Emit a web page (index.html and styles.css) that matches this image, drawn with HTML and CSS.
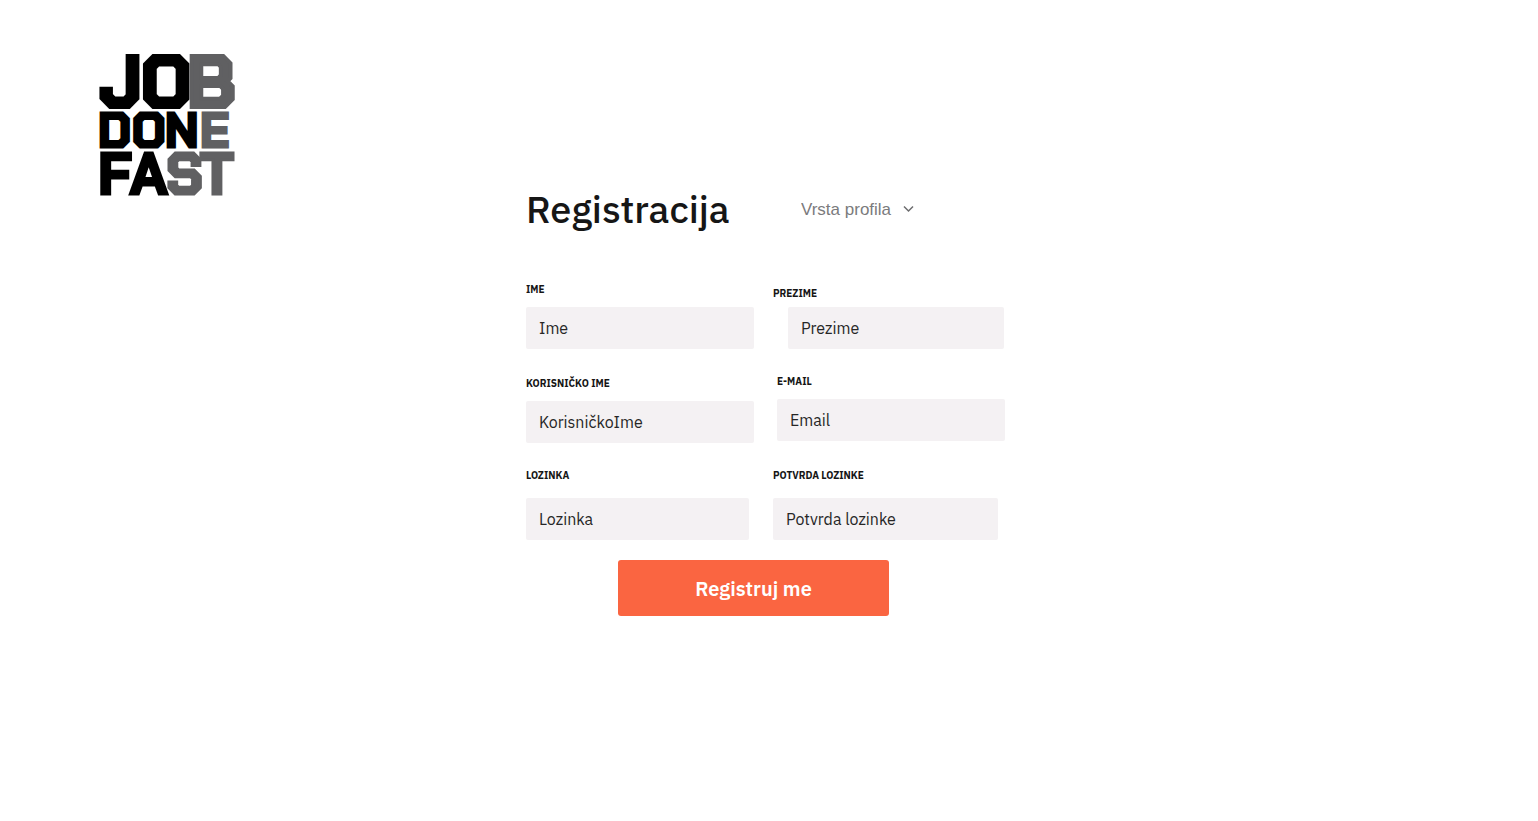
FILE: index.html
```html
<!DOCTYPE html>
<html lang="hr">
<head>
<meta charset="utf-8">
<meta name="viewport" content="width=device-width, initial-scale=1">
<title>Registracija</title>
<link rel="stylesheet" href="styles.css">
</head>
<body>
<div class="page">
  <header class="brand">
    <svg class="logo" viewBox="0 0 137 146" role="img" aria-label="Job Done Fast">
      <g class="logo-text">
        <text class="logo-job" x="1 42 88" y="56">JO<tspan class="logo-gray">B</tspan></text>
        <text class="logo-done" x="-1 33 66 101" y="96">DON<tspan class="logo-gray">E</tspan></text>
        <text class="logo-fast" x="-1 31 67 101" y="143">FA<tspan class="logo-gray">ST</tspan></text>
      </g>
    </svg>
  </header>
  <main class="register">
    <form class="form">
      <div class="heading">
        <h1 class="title">Registracija</h1>
        <div class="profile">
          <select class="profile-select" aria-label="Vrsta profila">
            <option>Vrsta profila</option>
          </select>
          <svg class="chevron" viewBox="0 0 12 8" aria-hidden="true"><path d="M1 1.500 5.500 6 10 1.500"/></svg>
        </div>
      </div>
      <div class="row">
        <div class="field">
          <label class="label" for="ime">IME</label>
          <input class="input" id="ime" type="text" placeholder="Ime">
        </div>
        <div class="field field-surname">
          <label class="label" for="prezime">PREZIME</label>
          <input class="input" id="prezime" type="text" placeholder="Prezime">
        </div>
      </div>
      <div class="row">
        <div class="field field-username">
          <label class="label" for="korisnicko">KORISNIČKO IME</label>
          <input class="input" id="korisnicko" type="text" placeholder="KorisničkoIme">
        </div>
        <div class="field field-email">
          <label class="label" for="email">E-MAIL</label>
          <input class="input" id="email" type="email" placeholder="Email">
        </div>
      </div>
      <div class="row">
        <div class="field field-password">
          <label class="label" for="lozinka">LOZINKA</label>
          <input class="input" id="lozinka" type="password" placeholder="Lozinka">
        </div>
        <div class="field field-confirm">
          <label class="label" for="potvrda">POTVRDA LOZINKE</label>
          <input class="input" id="potvrda" type="password" placeholder="Potvrda lozinke">
        </div>
      </div>
      <button class="submit" type="submit">Registruj me</button>
    </form>
  </main>
</div>
</body>
</html>
```
FILE: styles.css
```css
* { box-sizing: border-box; }

body {
  margin: 0;
  background: #fff;
  color: #161616;
  font-family: "IBM Plex Sans", "Noto Sans", sans-serif;
}

.page {
  display: grid;
  grid-template-columns: 1fr minmax(0, 486px) 1fr;
}

.brand { padding: 51px 0 0 99px; }

.logo {
  display: block;
  width: 137px;
  height: 146px;
  overflow: visible;
}

.logo-text {
  font-family: "Chakra Petch", "Quantico", "Roboto Condensed", Roboto, sans-serif;
  font-weight: 900;
  fill: #000;
  stroke: #000;
  stroke-linejoin: miter;
}

.logo-job { font-size: 72px; stroke-width: 4px; }
.logo-done { font-size: 48px; stroke-width: 3px; }
.logo-fast { font-size: 58px; stroke-width: 3px; }
.logo-gray { fill: #606062; stroke: #606062; }

.register { padding: 184px 0 48px; }

.form {
  display: flex;
  flex-direction: column;
  gap: 26px;
}

.heading {
  display: flex;
  align-items: center;
  height: 50px;
  margin-bottom: 23px;
}

.title {
  width: 275px;
  margin: 0;
  font-size: 38px;
  font-weight: 500;
  line-height: 50px;
}

.profile {
  display: flex;
  align-items: center;
}

.profile-select {
  appearance: none;
  width: 114px;
  margin-right: -12px;
  padding: 0;
  border: 0;
  background: transparent;
  color: #7b7b7d;
  font: 17px "Liberation Sans", sans-serif;
}

.chevron {
  width: 12px;
  height: 8px;
  fill: none;
  stroke: #6c6c6e;
  stroke-width: 1.5;
  pointer-events: none;
}

.row {
  display: grid;
  grid-template-columns: 228px 232px;
  gap: 19px;
}

.field {
  display: flex;
  flex-direction: column;
  gap: 10px;
}

.field-surname {
  gap: 6px;
  padding-top: 4px;
}
.field-surname .input { width: 216px; margin-left: 15px; }
.field-username { padding-top: 2px; }
.field-email { padding-left: 4px; }
.field-password, .field-confirm { gap: 15px; }
.field-password .input { width: 223px; }
.field-confirm .input { width: 225px; }

.label {
  font-size: 10px;
  font-weight: 700;
  line-height: 14px;
}

.input {
  width: 100%;
  height: 42px;
  padding: 0 13px;
  border: 0;
  border-radius: 2px;
  background: #f4f1f3;
  color: #262626;
  font: 16px "IBM Plex Sans", "Noto Sans", sans-serif;
}

.input::placeholder {
  color: #262626;
  opacity: 1;
}

.submit {
  width: 271px;
  height: 56px;
  margin: -6px 0 0 92px;
  padding: 0;
  border: 0;
  border-radius: 3px;
  background: #fa6541;
  color: #fff;
  font: 600 20px "IBM Plex Sans", "Noto Sans", sans-serif;
}
```
